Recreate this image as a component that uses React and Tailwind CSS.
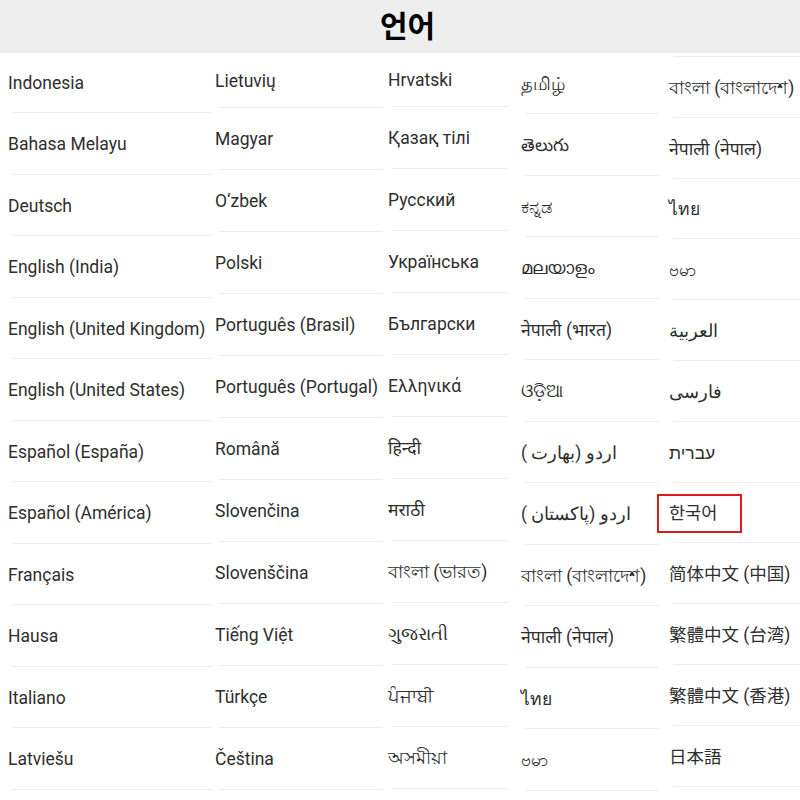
const columns = [
  {
    w: 'w-[212px]',
    first: 'h-[60px]',
    row: 'h-[61.5px]',
    pl: 'pl-[8px]',
    sep: 'ml-[12px]',
    items: [
      'Indonesia', 'Bahasa Melayu', 'Deutsch', 'English (India)', 'English (United Kingdom)',
      'English (United States)', 'Español (España)', 'Español (América)', 'Français', 'Hausa',
      'Italiano', 'Latviešu',
    ],
  },
  {
    w: 'w-[175px]',
    first: 'h-[55px]',
    row: 'h-[62px]',
    pl: 'pl-[3px]',
    sep: 'ml-[7px] mr-[4px]',
    items: [
      'Lietuvių', 'Magyar', 'O‘zbek', 'Polski', 'Português (Brasil)', 'Português (Portugal)',
      'Română', 'Slovenčina', 'Slovenščina', 'Tiếng Việt', 'Türkçe', 'Čeština',
    ],
  },
  {
    w: 'w-[128px]',
    first: 'h-[54px]',
    row: 'h-[62px]',
    pl: 'pl-[1px]',
    sep: 'ml-[5px] mr-[7px]',
    items: [
      'Hrvatski', 'Қазақ тілі', 'Русский', 'Українська', 'Български', 'Ελληνικά',
      'हिन्दी', 'मराठी', 'বাংলা (ভারত)', 'ગુજરાતી', 'ਪੰਜਾਬੀ', 'অসমীয়া',
    ],
  },
  {
    w: 'w-[150px]',
    first: 'h-[61px]',
    row: 'h-[61.5px]',
    pl: 'pl-[6px]',
    sep: 'ml-[10px] mr-[6px]',
    items: [
      'தமிழ்', 'తెలుగు', 'ಕನ್ನಡ', 'മലയാളം', 'नेपाली (भारत)', 'ଓଡ଼ିଆ',
      'اردو (بھارت )', 'اردو (پاکستان )', 'বাংলা (বাংলাদেশ)', 'नेपाली (नेपाल)', 'ไทย', 'ဗမာ',
    ],
  },
  {
    w: 'w-[135px]',
    first: 'h-[60.8px]',
    row: 'h-[60.8px]',
    pl: 'pl-[4px]',
    sep: 'ml-[8px]',
    topSep: true,
    items: [
      'বাংলা (বাংলাদেশ)', 'नेपाली (नेपाल)', 'ไทย', 'ဗမာ', 'العربية', 'فارسی',
      'עברית', '한국어', '简体中文 (中国)', '繁體中文 (台湾)', '繁體中文 (香港)', '日本語',
    ],
  },
];

const Row = ({ label, col, first, selected }) => (
  <div className={`relative flex flex-col ${first ? col.first : col.row}`}>
    <div className={`flex flex-1 items-center whitespace-nowrap pt-[2px] ${col.pl}`}>
      <span dir="auto" className="text-[17.5px] text-[#2e2e2e]">{label}</span>
    </div>
    <div className={`h-px bg-[#eeeeee] ${col.sep}`} />
    {selected && (
      <div className="absolute left-[-8px] top-[11px] h-[39px] w-[85px] border-2 border-[#e01b1b]" />
    )}
  </div>
);

export default function App() {
  return (
    <div className="h-[800px] w-[800px] overflow-hidden bg-white font-['Roboto','Noto_Sans','Noto_Sans_CJK_KR',sans-serif]">
      <div className="flex h-[53px] items-center justify-center bg-[#eeeeee] pl-[15px]">
        <h1 className="text-[30px] font-bold text-black">언어</h1>
      </div>
      <div className="flex">
        {columns.map((col, ci) => (
          <div key={ci} className={`flex shrink-0 flex-col ${col.w}`}>
            {col.topSep && <div className={`mt-[3px] h-px bg-[#eeeeee] ${col.sep}`} />}
            {col.items.map((label, i) => (
              <Row
                key={label + i}
                label={label}
                col={col}
                first={i === 0 && !col.topSep}
                selected={label === '한국어'}
              />
            ))}
          </div>
        ))}
      </div>
    </div>
  );
}
